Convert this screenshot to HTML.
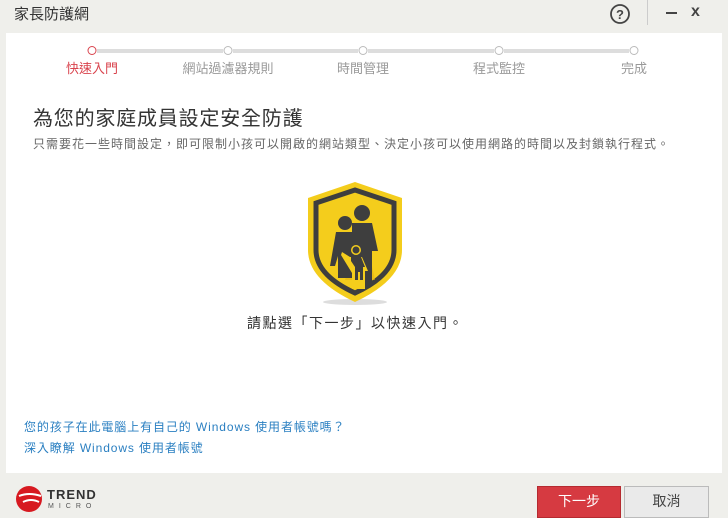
<!DOCTYPE html>
<html><head><meta charset="utf-8"><style>
*{margin:0;padding:0;box-sizing:border-box}
body{width:728px;height:515px;background:#efefeb;font-family:"Liberation Sans","Noto Sans CJK TC",sans-serif;position:relative;overflow:hidden}
.abs{position:absolute}
.panel{left:6px;top:33px;width:716px;height:440px;background:#fff}
.lbl{top:58px;font-size:13px;color:#999;white-space:nowrap;transform:translateX(-50%)}
.dot{top:46px;width:9px;height:9px;border:1.5px solid #bbb;border-radius:50%;background:#fff;transform:translateX(-50%)}
.line{top:49px;height:4px;background:#ddd}
</style></head><body>
<div class="abs" style="left:14px;top:3px;font-size:15px;color:#333">家長防護網</div>
<svg class="abs" style="left:609px;top:3px" width="22" height="22"><circle cx="11" cy="11" r="9" fill="none" stroke="#444" stroke-width="1.8"/><text x="11" y="16" font-size="13" text-anchor="middle" fill="#444" font-family="Liberation Sans" font-weight="bold">?</text></svg>
<div class="abs" style="left:647px;top:0;width:1px;height:25px;background:#ccc"></div>
<div class="abs" style="left:666px;top:12px;width:11px;height:2px;background:#444"></div>
<div class="abs" style="left:691px;top:3px;font-size:16px;color:#444;font-weight:bold">x</div>
<div class="abs panel"></div>
<div class="abs line" style="left:97px;width:126px"></div>
<div class="abs line" style="left:233px;width:125px"></div>
<div class="abs line" style="left:368px;width:126px"></div>
<div class="abs line" style="left:504px;width:125px"></div>
<div class="abs dot" style="left:92px;border-color:#d9434d"></div>
<div class="abs dot" style="left:228px"></div>
<div class="abs dot" style="left:363px"></div>
<div class="abs dot" style="left:499px"></div>
<div class="abs dot" style="left:634px"></div>
<div class="abs lbl" style="left:92px;color:#d9434d">快速入門</div>
<div class="abs lbl" style="left:228px">網站過濾器規則</div>
<div class="abs lbl" style="left:363px">時間管理</div>
<div class="abs lbl" style="left:499px">程式監控</div>
<div class="abs lbl" style="left:634px">完成</div>
<div class="abs" style="left:33px;top:102px;font-size:20px;color:#333;letter-spacing:0.8px">為您的家庭成員設定安全防護</div>
<div class="abs" style="left:33px;top:135px;font-size:12px;color:#666;white-space:nowrap;letter-spacing:1px">只需要花一些時間設定，即可限制小孩可以開啟的網站類型、決定小孩可以使用網路的時間以及封鎖執行程式。</div>
<svg class="abs" style="left:305px;top:180px" width="100" height="125" viewBox="0 0 100 125">
<ellipse cx="50" cy="122" rx="32" ry="3" fill="#ddd"/>
<path d="M50 2 L97 18 L97 70 Q97 100 50 122 Q3 100 3 70 L3 18 Z" fill="#f4cd1c"/>
<path d="M50 10 L89 23 L89 70 Q89 95 50 113 Q11 95 11 70 L11 23 Z" fill="none" stroke="#3e3e3e" stroke-width="5"/>
<path d="M58 45 L40 100 L70 100 Z" fill="#e2b410" opacity=".6"/>
<circle cx="57" cy="33" r="8" fill="#3e3e3e"/>
<path d="M47 43 h20 l6 28 h-6 v35 h-20 z" fill="#3e3e3e"/>
<circle cx="40" cy="43" r="7" fill="#3e3e3e"/>
<path d="M31 52 h18 v46 h-16 v-22 l-3 10 h-5 z" fill="#3e3e3e"/>
<circle cx="51" cy="70" r="5" fill="#f4cd1c"/>
<path d="M37 72 l8 5 h12 l6 14 h-3 v18 h-13 v-16 l-11 -18 z" fill="#f4cd1c"/>
<circle cx="51" cy="70" r="3.5" fill="#3e3e3e"/>
<path d="M46 77 h10 l4 10 h-2 v13 h-3 v-8 h-2 v8 h-3 v-13 l-4-6 z" fill="#3e3e3e"/>
</svg>
<div class="abs" style="left:247px;top:313px;font-size:14px;color:#333;letter-spacing:1.5px">請點選「下一步」以快速入門。</div>
<div class="abs" style="left:24px;top:418px;font-size:12px;color:#2a7fc1;letter-spacing:0.9px">您的孩子在此電腦上有自己的 Windows 使用者帳號嗎？</div>
<div class="abs" style="left:24px;top:439px;font-size:12px;color:#2a7fc1;letter-spacing:0.9px">深入瞭解 Windows 使用者帳號</div>
<svg class="abs" style="left:15px;top:484px" width="30" height="30"><circle cx="14" cy="15" r="13" fill="#d71920"/><path d="M4 12 Q14 8 26 12 M8 18 Q16 14 24 18" stroke="#fff" stroke-width="2" fill="none"/></svg>
<div class="abs" style="left:47px;top:487px;font-size:13px;font-weight:bold;color:#333;letter-spacing:1px">TREND</div>
<div class="abs" style="left:48px;top:503px;font-size:7px;color:#555;letter-spacing:5px">MICRO</div>
<div class="abs" style="left:537px;top:486px;width:84px;height:32px;background:#d63a41;border:1px solid #b52a30;color:#fff;font-size:14px;text-align:center;line-height:28px">下一步</div>
<div class="abs" style="left:624px;top:486px;width:85px;height:32px;background:#eaeaea;border:1px solid #bbb;color:#444;font-size:14px;text-align:center;line-height:28px">取消</div>
</body></html>
